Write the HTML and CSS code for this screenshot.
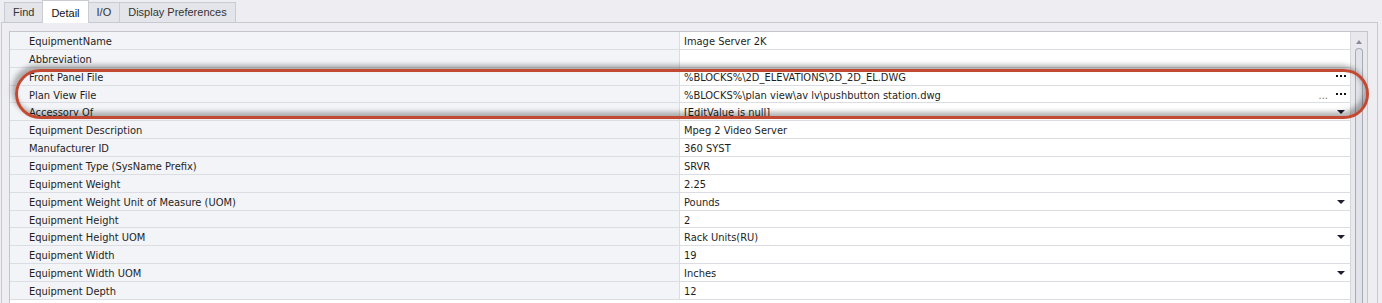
FILE: index.html
```html
<!DOCTYPE html>
<html lang="en">
<head>
    <meta charset="UTF-8">
    <title>Equipment Detail</title>
    <link rel="stylesheet" href="styles.css">
</head>
<body>
    <div class="tabs">
        <div class="tab">Find</div>
        <div class="tab active">Detail</div>
        <div class="tab">I/O</div>
        <div class="tab">Display Preferences</div>
    </div>
    <div class="panel">
        <div class="grid">
            <div class="rows">
                <div class="row"><div class="name">EquipmentName</div><div class="value">Image Server 2K</div></div>
                <div class="row"><div class="name">Abbreviation</div><div class="value"></div></div>
                <div class="row"><div class="name">Front Panel File</div><div class="value">%BLOCKS%\2D_ELEVATIONS\2D_2D_EL.DWG<span class="btn-dots"><i></i><i></i><i></i></span></div></div>
                <div class="row"><div class="name">Plan View File</div><div class="value">%BLOCKS%\plan view\av lv\pushbutton station.dwg<span class="trunc">...</span><span class="btn-dots"><i></i><i></i><i></i></span></div></div>
                <div class="row"><div class="name">Accessory Of</div><div class="value">[EditValue is null]<span class="drop"></span></div></div>
                <div class="row"><div class="name">Equipment Description</div><div class="value">Mpeg 2 Video Server</div></div>
                <div class="row"><div class="name">Manufacturer ID</div><div class="value">360 SYST</div></div>
                <div class="row"><div class="name">Equipment Type (SysName Prefix)</div><div class="value">SRVR</div></div>
                <div class="row"><div class="name">Equipment Weight</div><div class="value">2.25</div></div>
                <div class="row"><div class="name">Equipment Weight Unit of Measure (UOM)</div><div class="value">Pounds<span class="drop"></span></div></div>
                <div class="row"><div class="name">Equipment Height</div><div class="value">2</div></div>
                <div class="row"><div class="name">Equipment Height UOM</div><div class="value">Rack Units(RU)<span class="drop"></span></div></div>
                <div class="row"><div class="name">Equipment Width</div><div class="value">19</div></div>
                <div class="row"><div class="name">Equipment Width UOM</div><div class="value">Inches<span class="drop"></span></div></div>
                <div class="row"><div class="name">Equipment Depth</div><div class="value">12</div></div>
            </div>
            <div class="scrollbar">
                <div class="arrow-up"></div>
                <div class="thumb"></div>
            </div>
        </div>
    </div>
    <div class="callout"></div>
</body>
</html>
```

FILE: styles.css
```css
body {
    margin: 0;
    background-color: #eeeef2;
    font-family: "Liberation Sans", Arial, sans-serif;
    font-size: 11px;
    color: #1e1e1e;
    height: 303px;
    overflow: hidden;
}
.tabs {
    display: flex;
    align-items: flex-end;
    height: 22px;
    padding-left: 4px;
}
.tab {
    height: 19px;
    line-height: 19px;
    padding: 0 8px;
    background-color: #e4e5ea;
    border: 1px solid #cbccd2;
    border-bottom: none;
    margin-right: -1px;
    color: #333;
}
.tab.active {
    height: 22px;
    line-height: 24px;
    background-color: #fff;
    position: relative;
    z-index: 1;
    margin-bottom: -1px;
    color: #111;
}
.panel {
    border: 1px solid #c8c9cf;
    border-bottom: none;
    margin: 0 4px 0 1px;
    padding: 8px 9px 0 7px;
    height: 300px;
    background-color: #eeeef2;
}
.grid {
    display: flex;
    border: 1px solid #c5c6cd;
    border-bottom: none;
    height: 290px;
    background-color: #fff;
    font-family: "DejaVu Sans Condensed", "DejaVu Sans", sans-serif;
    font-stretch: condensed;
    font-size: 11px;
}
.rows {
    flex: 1;
}
.row {
    display: flex;
    height: 17.86px;
    box-sizing: border-box;
    border-bottom: 1px solid #dcdde3;
}
.name {
    width: 670px;
    flex-shrink: 0;
    padding: 1px 0 0 19px;
    box-sizing: border-box;
    background-color: #f3f4f7;
    border-right: 1px solid #dcdde3;
    line-height: 17px;
    white-space: nowrap;
}
.value {
    flex: 1;
    position: relative;
    padding: 1px 0 0 4px;
    line-height: 17px;
    white-space: nowrap;
}
.btn-dots {
    position: absolute;
    right: 4px;
    top: 7px;
    display: flex;
    gap: 2px;
}
.btn-dots i {
    width: 2px;
    height: 2px;
    background-color: #111;
}
.trunc {
    position: absolute;
    right: 22px;
    top: 1px;
    color: #8a6a3a;
}
.drop {
    position: absolute;
    right: 5px;
    top: 7px;
    width: 0;
    height: 0;
    border-left: 4px solid transparent;
    border-right: 4px solid transparent;
    border-top: 4px solid #1e1e2e;
}
.scrollbar {
    width: 16px;
    background-color: #e8e8ed;
    border-left: 1px solid #d6d7dd;
    display: flex;
    flex-direction: column;
    align-items: center;
}
.arrow-up {
    margin-top: 8px;
    width: 0;
    height: 0;
    border-left: 3px solid transparent;
    border-right: 3px solid transparent;
    border-bottom: 4px solid #8a8b98;
}
.thumb {
    margin-top: 4px;
    width: 6px;
    flex: 1;
    border: 1px solid #a9aab8;
    border-bottom: none;
    border-radius: 4px 4px 0 0;
    background-color: #e2e3e9;
}
.callout {
    position: absolute;
    left: 15px;
    top: 69px;
    width: 1348px;
    height: 44px;
    border: 3px solid #c24a33;
    border-radius: 25px;
    box-shadow: -3px -4px 5px rgba(0, 0, 0, 0.3), inset -3px -4px 5px rgba(0, 0, 0, 0.3);
}
```
